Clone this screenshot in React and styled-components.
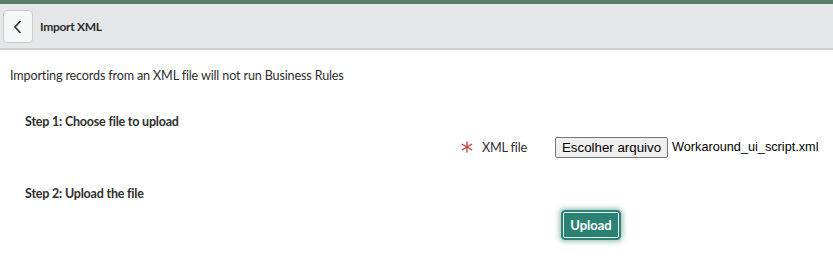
import React from "react";
import styled, { createGlobalStyle } from "styled-components";

const GlobalStyle = createGlobalStyle`
  body {
    margin: 0;
    background: #fff;
    font-family: "Lato", "Noto Sans", sans-serif;
    color: #2e2e2e;
  }
`;

const Page = styled.div`
  width: 833px;
  height: 256px;
  overflow: hidden;
  border-top: 4px solid #5a7e6c;
  box-sizing: border-box;
`;

const Header = styled.header`
  height: 46px;
  background: #e4e6e7;
  border-bottom: 2px solid #cfd1d2;
  display: flex;
  align-items: center;
  padding-left: 3px;
  box-sizing: border-box;
  gap: 7px;
`;

const BackButton = styled.button`
  width: 30px;
  height: 33px;
  margin-top: 1px;
  background: #f6f7f7;
  border: 1px solid #c9cbcc;
  border-radius: 4px;
  display: flex;
  align-items: center;
  justify-content: center;
  padding: 0;
`;

const Title = styled.h1`
  margin: 0;
  font-size: 12px;
  font-weight: 700;
  color: #2e2e2e;
  letter-spacing: -0.3px;
`;

const Body = styled.main`
  padding: 0 10px;
`;

const Notice = styled.p`
  margin: 18px 0 0;
  font-size: 12.6px;
  letter-spacing: -0.15px;
`;

const StepTitle = styled.h2`
  margin: ${(p) => p.$top}px 0 0 15px;
  font-size: 12.5px;
  font-weight: 700;
  color: #2e2e2e;
  letter-spacing: -0.2px;
`;

const FieldRow = styled.div`
  display: flex;
  align-items: center;
  margin-top: 7px;
  padding-left: 451px;
  height: 22px;
`;

const Label = styled.label`
  display: flex;
  align-items: center;
  gap: 9px;
  width: 94px;
  font-size: 12.6px;
  letter-spacing: -0.15px;
`;

const FileButton = styled.span`
  font-family: "Liberation Sans", Arial, sans-serif;
  font-size: 13.3px;
  color: #000;
  background: #efefef;
  border: 1px solid #767676;
  border-radius: 2px;
  padding: 0 6px;
  height: 19px;
  line-height: 19px;
  white-space: nowrap;
  flex-shrink: 0;
  box-sizing: content-box;
`;

const FileName = styled.span`
  font-family: "Liberation Sans", Arial, sans-serif;
  font-size: 12.7px;
  color: #000;
  margin-left: 4px;
  white-space: nowrap;
`;

const UploadRow = styled.div`
  padding-left: 551px;
  margin-top: 9px;
`;

const UploadButton = styled.button`
  font-family: "Lato", sans-serif;
  font-size: 13px;
  font-weight: 700;
  color: #fff;
  background: #2b8272;
  border: 1px solid #2b8272;
  outline: 1px solid #e8f3f0;
  outline-offset: -3px;
  border-radius: 4px;
  box-shadow: 0 0 5px 2px rgba(43, 130, 114, 0.45);
  width: 60px;
  height: 30px;
  padding: 0;
`;

function Asterisk() {
  return (
    <svg width="12" height="12" viewBox="0 0 12 12">
      <g stroke="#c8413b" strokeWidth="1.3" strokeLinecap="round">
        <line x1="6" y1="0.8" x2="6" y2="11.2" />
        <line x1="1.3" y1="3.3" x2="10.7" y2="8.7" />
        <line x1="1.3" y1="8.7" x2="10.7" y2="3.3" />
      </g>
    </svg>
  );
}

export default function App() {
  return (
    <>
      <GlobalStyle />
      <Page>
        <Header>
          <BackButton aria-label="Back">
            <svg width="12" height="16" viewBox="0 0 12 16">
              <path d="M8.5 2 L3 8 L8.5 14" fill="none" stroke="#2e2e2e" strokeWidth="1.6" />
            </svg>
          </BackButton>
          <Title>Import XML</Title>
        </Header>
        <Body>
          <Notice>Importing records from an XML file will not run Business Rules</Notice>
          <StepTitle $top={31}>Step 1: Choose file to upload</StepTitle>
          <FieldRow>
            <Label>
              <Asterisk />
              XML file
            </Label>
            <FileButton>Escolher arquivo</FileButton>
            <FileName>Workaround_ui_script.xml</FileName>
          </FieldRow>
          <StepTitle $top={28}>Step 2: Upload the file</StepTitle>
          <UploadRow>
            <UploadButton>Upload</UploadButton>
          </UploadRow>
        </Body>
      </Page>
    </>
  );
}
